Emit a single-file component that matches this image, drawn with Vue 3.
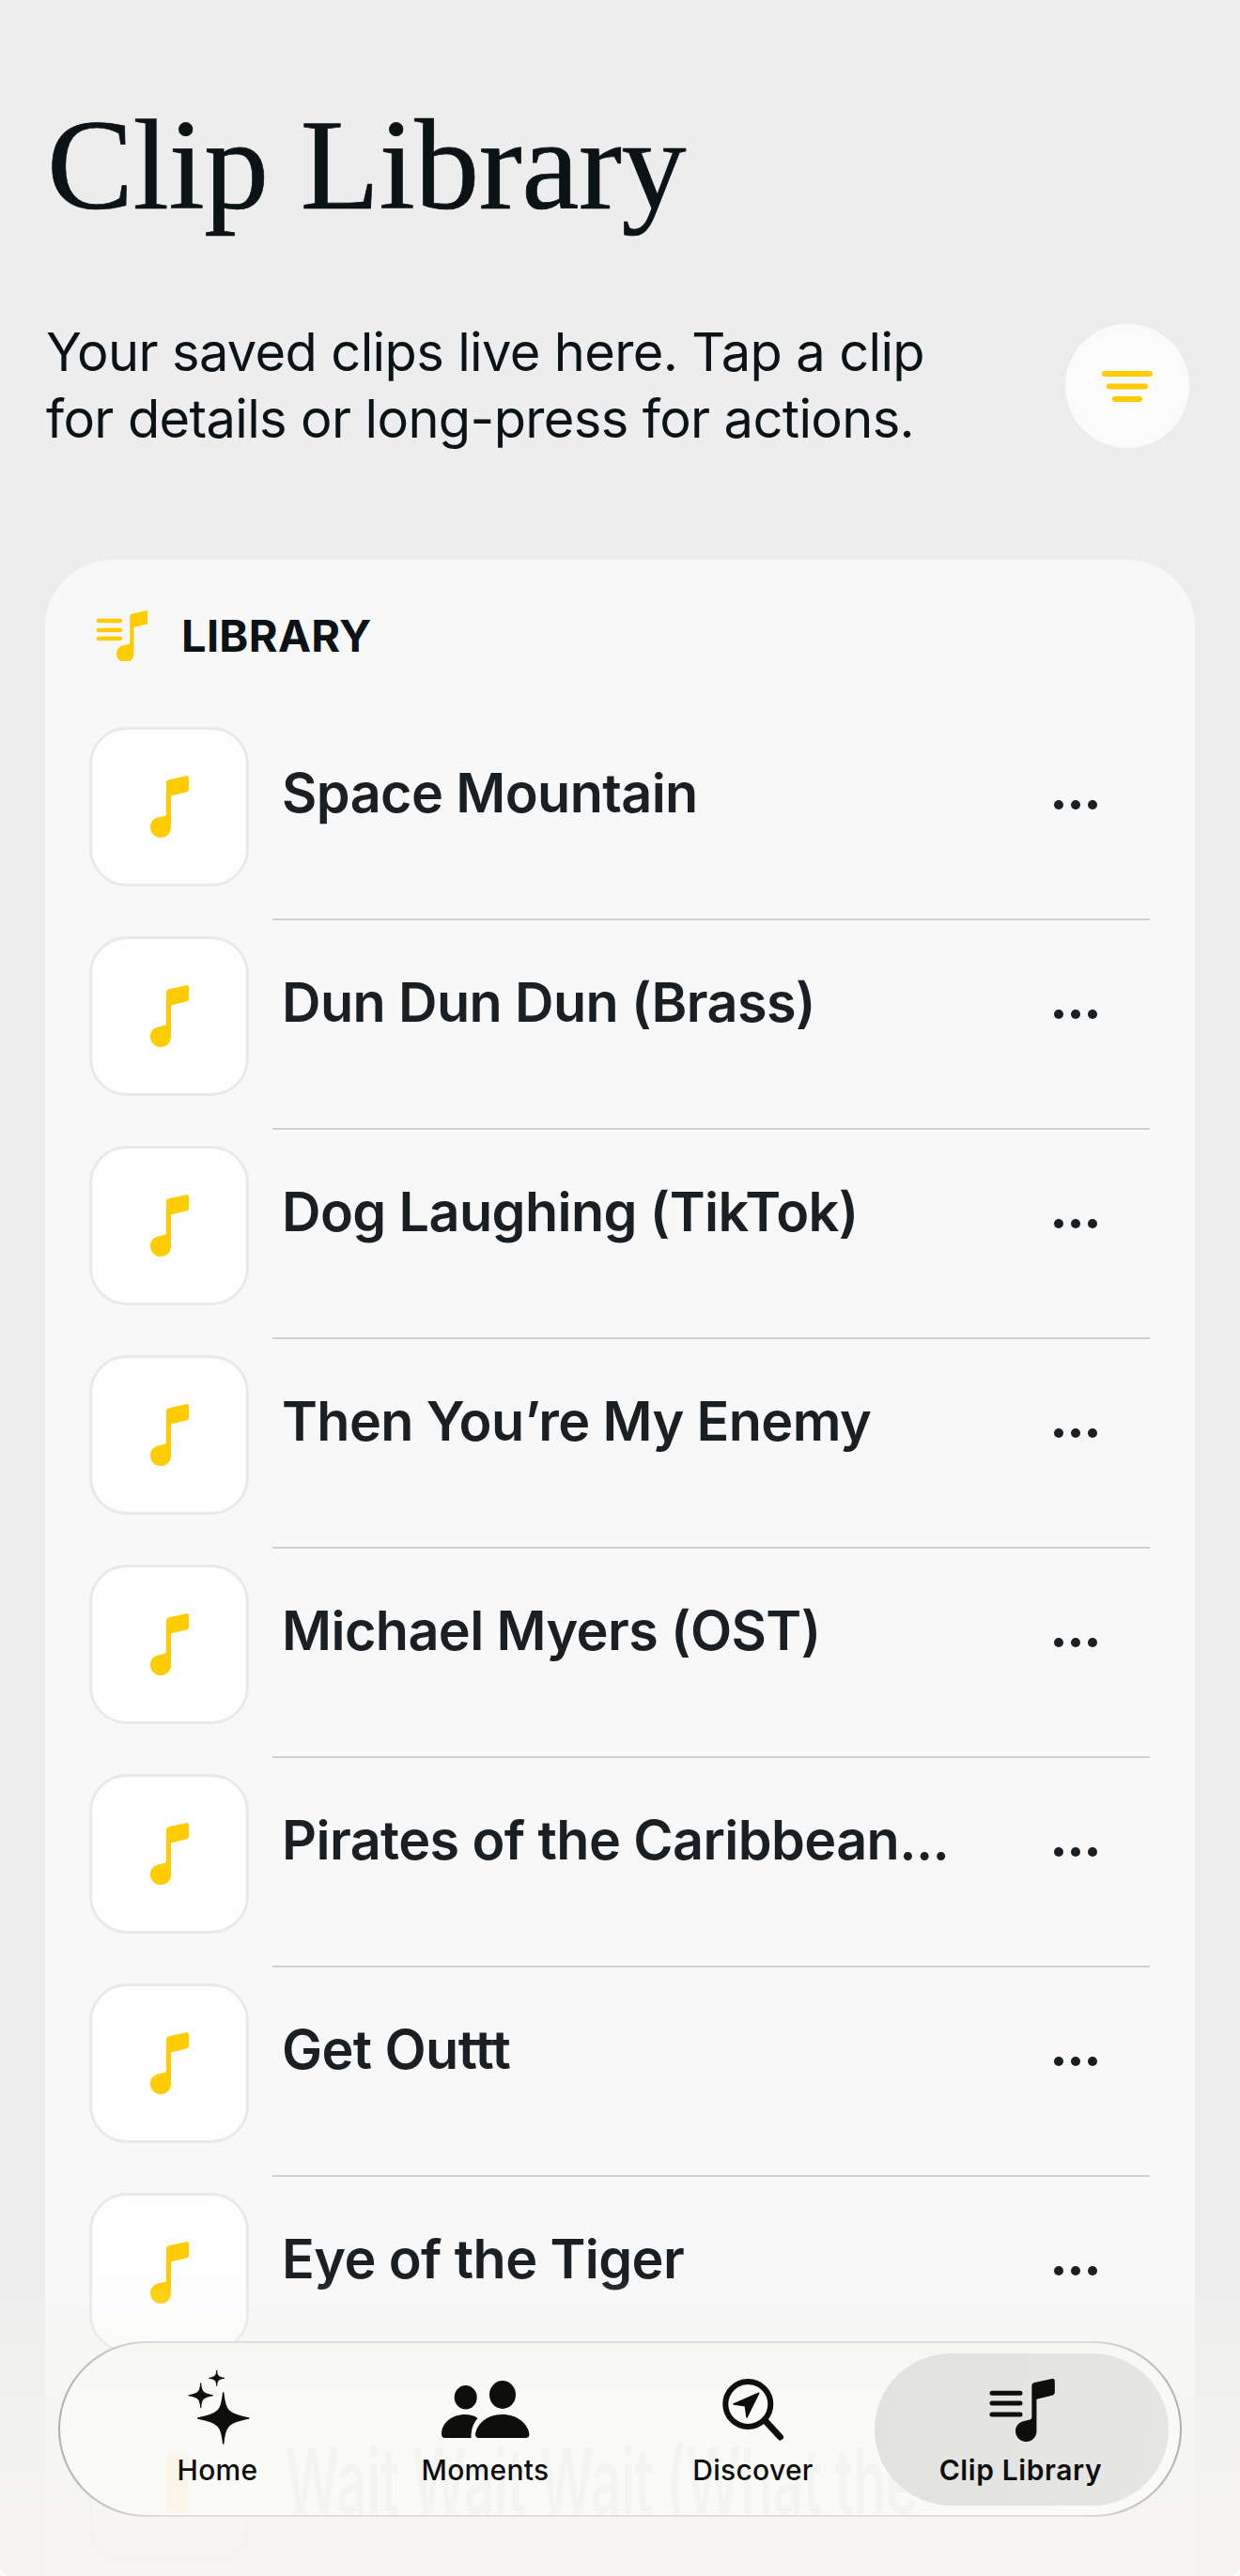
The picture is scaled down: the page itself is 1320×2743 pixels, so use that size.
<script setup>
const clips = [
  'Space Mountain',
  'Dun Dun Dun (Brass)',
  'Dog Laughing (TikTok)',
  'Then You’re My Enemy',
  'Michael Myers (OST)',
  'Pirates of the Caribbean...',
  'Get Outtt',
  'Eye of the Tiger',
  '',
]
const notePath = 'M17 8q0-3 3-3.7L38 .2q3-.6 3 2.4V14q0 3-3 3.6L22 21.5V55c0 6.5-5 11-11 11S0 61 0 55c0-5 3-9 8-10.4l7-1.6q2-.5 2-2.6Z'
function star(cx, cy, r) {
  const k = r * 0.16
  const t = r * 0.62
  return `M${cx} ${cy - r}C${cx + k * 0.4} ${cy - t * 0.5} ${cx + k} ${cy - k} ${cx + r} ${cy}C${cx + k} ${cy + k} ${cx + k * 0.4} ${cy + t * 0.5} ${cx} ${cy + r}C${cx - k * 0.4} ${cy + t * 0.5} ${cx - k} ${cy + k} ${cx - r} ${cy}C${cx - k} ${cy - k} ${cx - k * 0.4} ${cy - t * 0.5} ${cx} ${cy - r}Z`
}
</script>

<template>
  <main class="page">
    <h1 class="title">Clip Library</h1>
    <section class="intro">
      <p class="lead">Your saved clips live here. Tap a clip<br />for details or long-press for actions.</p>
      <button class="filter" aria-label="Filter">
        <svg width="54" height="33" viewBox="0 0 54 33">
          <path d="M3 3h48M8 16.500h38M14 30h26" stroke="#ffcc00" stroke-width="6" stroke-linecap="round" fill="none" />
        </svg>
      </button>
    </section>

    <section class="card">
      <header class="card-head">
        <svg class="head-icon" width="56" height="56" viewBox="0 0 56 56">
          <path d="M4 13h23M4 23h23M4 32h23" stroke="#ffcc00" stroke-width="4.500" stroke-linecap="round" fill="none" />
          <path :d="notePath" fill="#ffcc00" transform="translate(23 2) scale(.84)" />
        </svg>
        <h2 class="card-title">LIBRARY</h2>
      </header>

      <ul class="list">
        <li v-for="clip in clips" :key="clip" class="row">
          <div class="thumb">
            <svg width="41" height="66" viewBox="0 0 41 66"><path :d="notePath" fill="#ffcc00" /></svg>
          </div>
          <div v-if="clip" class="row-body">
            <span class="clip-name">{{ clip }}</span>
            <span class="dots"><i></i><i></i><i></i></span>
          </div>
        </li>
      </ul>
    </section>

    <div class="fade"></div>

    <nav class="nav">
      <span class="ghost-note"></span>
      <span class="ghost">Wait Wait Wait (What the</span>
      <a class="tab">
        <svg class="icon" width="80" height="80" viewBox="0 0 80 80">
          <path :d="star(45.700, 51, 27)" fill="#0e0e0d" stroke="#0e0e0d" stroke-width="1.500" stroke-linejoin="round" />
          <path :d="star(21.700, 26.700, 13)" fill="#0e0e0d" stroke="#0e0e0d" stroke-width="1" stroke-linejoin="round" />
          <path :d="star(38.700, 8.300, 8.300)" fill="#0e0e0d" stroke="#0e0e0d" stroke-width=".8" stroke-linejoin="round" />
        </svg>
        <span class="tab-label">Home</span>
      </a>
      <a class="tab">
        <svg class="icon" width="80" height="80" viewBox="0 0 80 80">
          <ellipse cx="58" cy="26" rx="14" ry="15" fill="#0e0e0d" />
          <ellipse cx="18.700" cy="28.700" rx="12" ry="12.800" fill="#0e0e0d" />
          <path d="M-7 68C-7 56 4 47 18 47 23 47 28 48 31.500 51 27 56 24.500 62 24.500 72H-3Q-7 72-7 68Z" fill="#0e0e0d" />
          <path d="M33 72Q29 72 29 68C31 56 42 47 58 47 74 47 84.500 57 86.300 67Q87 72 82 72Z" fill="#0e0e0d" />
        </svg>
        <span class="tab-label">Moments</span>
      </a>
      <a class="tab">
        <svg class="icon" width="80" height="80" viewBox="0 0 80 80">
          <circle cx="34.300" cy="36" r="24" fill="none" stroke="#0e0e0d" stroke-width="6" />
          <path d="M52 53 68.500 71" stroke="#0e0e0d" stroke-width="7" stroke-linecap="round" />
          <path d="M45.700 24.300 19 36 31.300 37.700 33 50Z" fill="#0e0e0d" stroke="#0e0e0d" stroke-width="1.500" stroke-linejoin="round" />
        </svg>
        <span class="tab-label">Discover</span>
      </a>
      <a class="tab tab-active">
        <svg class="icon" width="80" height="80" viewBox="0 0 80 80">
          <path d="M9 24.300h30M9 35h30M9 47h30" stroke="#0e0e0d" stroke-width="5" stroke-linecap="round" fill="none" />
          <path :d="notePath" fill="#0e0e0d" transform="translate(34 8.700) scale(1.020)" />
        </svg>
        <span class="tab-label">Clip Library</span>
      </a>
    </nav>
  </main>
</template>

<style>
html, body { margin: 0; padding: 0; background: #fbfbfa; }
</style>

<style scoped>
.page {
  position: relative;
  width: 1320px;
  height: 2743px;
  overflow: hidden;
  border-radius: 0 0 14px 14px;
  background: #ededed;
  font-family: Inter, "Liberation Sans", sans-serif;
  color: #0b1317;
}
.title {
  margin: 0;
  padding: 101px 0 0 50px;
  font-family: "Liberation Serif", serif;
  font-weight: 400;
  font-size: 138px;
  line-height: 150px;
  letter-spacing: -.5px;
  -webkit-text-stroke: .7px #0b1317;
  color: #0b1317;
}
.intro {
  display: flex;
  align-items: center;
  justify-content: space-between;
  margin-top: 89px;
  padding: 0 54px 0 49px;
}
.lead {
  margin: 0;
  font-size: 56px;
  line-height: 71px;
  letter-spacing: -.65px;
  color: #0b1317;
}
.filter {
  width: 132px;
  height: 132px;
  border: 0;
  border-radius: 50%;
  background: #fbfbfb;
  display: flex;
  align-items: center;
  justify-content: center;
  padding: 0;
}
.card {
  margin: 114px 48px 0;
  padding: 52px 48px 0 47px;
  border-radius: 72px 72px 0 0;
  background: #f8f8f8;
  height: 2147px;
  box-sizing: border-box;
}
.card-head {
  display: flex;
  align-items: center;
  height: 56px;
  padding-left: 6px;
  gap: 36px;
}
.card-title {
  margin: 0;
  font-size: 47px;
  font-weight: 700;
  letter-spacing: .3px;
  color: #0b1317;
}
.list {
  list-style: none;
  margin: 70px 0 0;
  padding: 0;
}
.row {
  display: flex;
  align-items: flex-start;
  height: 223px;
}
.thumb {
  flex: none;
  width: 170px;
  height: 170px;
  box-sizing: border-box;
  border: 3px solid #e9e9e9;
  border-radius: 40px;
  background: #fefefe;
  display: flex;
  align-items: center;
  justify-content: center;
}
.row-body {
  flex: none;
  width: 934px;
  height: 206px;
  margin-left: 25px;
  padding-left: 10px;
  box-sizing: border-box;
  border-bottom: 2px solid #cfcfcf;
  position: relative;
}
.clip-name {
  display: block;
  margin-top: 34px;
  font-size: 57.500px;
  line-height: 72px;
  font-weight: 600;
  letter-spacing: -.6px;
  color: #1a1f24;
}
.dots {
  position: absolute;
  top: 78px;
  left: 832px;
  display: flex;
  gap: 8px;
}
.dots i {
  width: 10px;
  height: 10px;
  border-radius: 50%;
  background: #1a1f24;
}
.fade {
  position: absolute;
  left: 0;
  right: 0;
  bottom: 0;
  height: 320px;
  background: linear-gradient(to bottom, rgba(245, 244, 240, 0) 0%, rgba(245, 244, 240, .5) 35%, rgba(245, 244, 240, .88) 75%, rgba(245, 244, 240, .95) 100%);
}
.nav {
  position: absolute;
  left: 62px;
  top: 2493px;
  width: 1196px;
  height: 187px;
  box-sizing: border-box;
  border-radius: 94px;
  border: 2px solid transparent;
  background:
    linear-gradient(to bottom, #f7f7f6, #fafaf8 40%, #fafaf8) padding-box,
    linear-gradient(to right, #b0b0ae, #dedede 9%, #dedede 91%, #b0b0ae) border-box;
  padding-left: 25px;
  display: grid;
  grid-template-columns: repeat(4, 285px);
  overflow: hidden;
}
.ghost {
  position: absolute;
  left: 239px;
  top: 85px;
  font-size: 57.500px;
  line-height: 72px;
  font-weight: 600;
  letter-spacing: -.6px;
  white-space: nowrap;
  color: rgba(0, 0, 0, .024);
  transform: scaleY(1.7);
  transform-origin: top left;
}
.ghost-note {
  position: absolute;
  left: 113px;
  top: 118px;
  width: 23px;
  height: 63px;
  background: rgba(255, 204, 0, .06);
}
.tab {
  position: relative;
  display: flex;
  flex-direction: column;
  align-items: center;
  justify-content: flex-end;
  height: 153px;
}
.tab-active::before {
  content: "";
  position: absolute;
  top: 11px;
  left: -13px;
  right: -15px;
  height: 162px;
  border-radius: 81px;
  background: linear-gradient(100deg, #e2e2e1, #e6e6e5);
}
.icon {
  position: relative;
  margin-bottom: 8px;
  overflow: visible;
}
.tab-label {
  position: relative;
  font-size: 30px;
  line-height: 36px;
  font-weight: 500;
  letter-spacing: .3px;
  color: #0e0e0d;
}
.tab-active .tab-label {
  font-weight: 600;
  letter-spacing: .6px;
}
</style>
